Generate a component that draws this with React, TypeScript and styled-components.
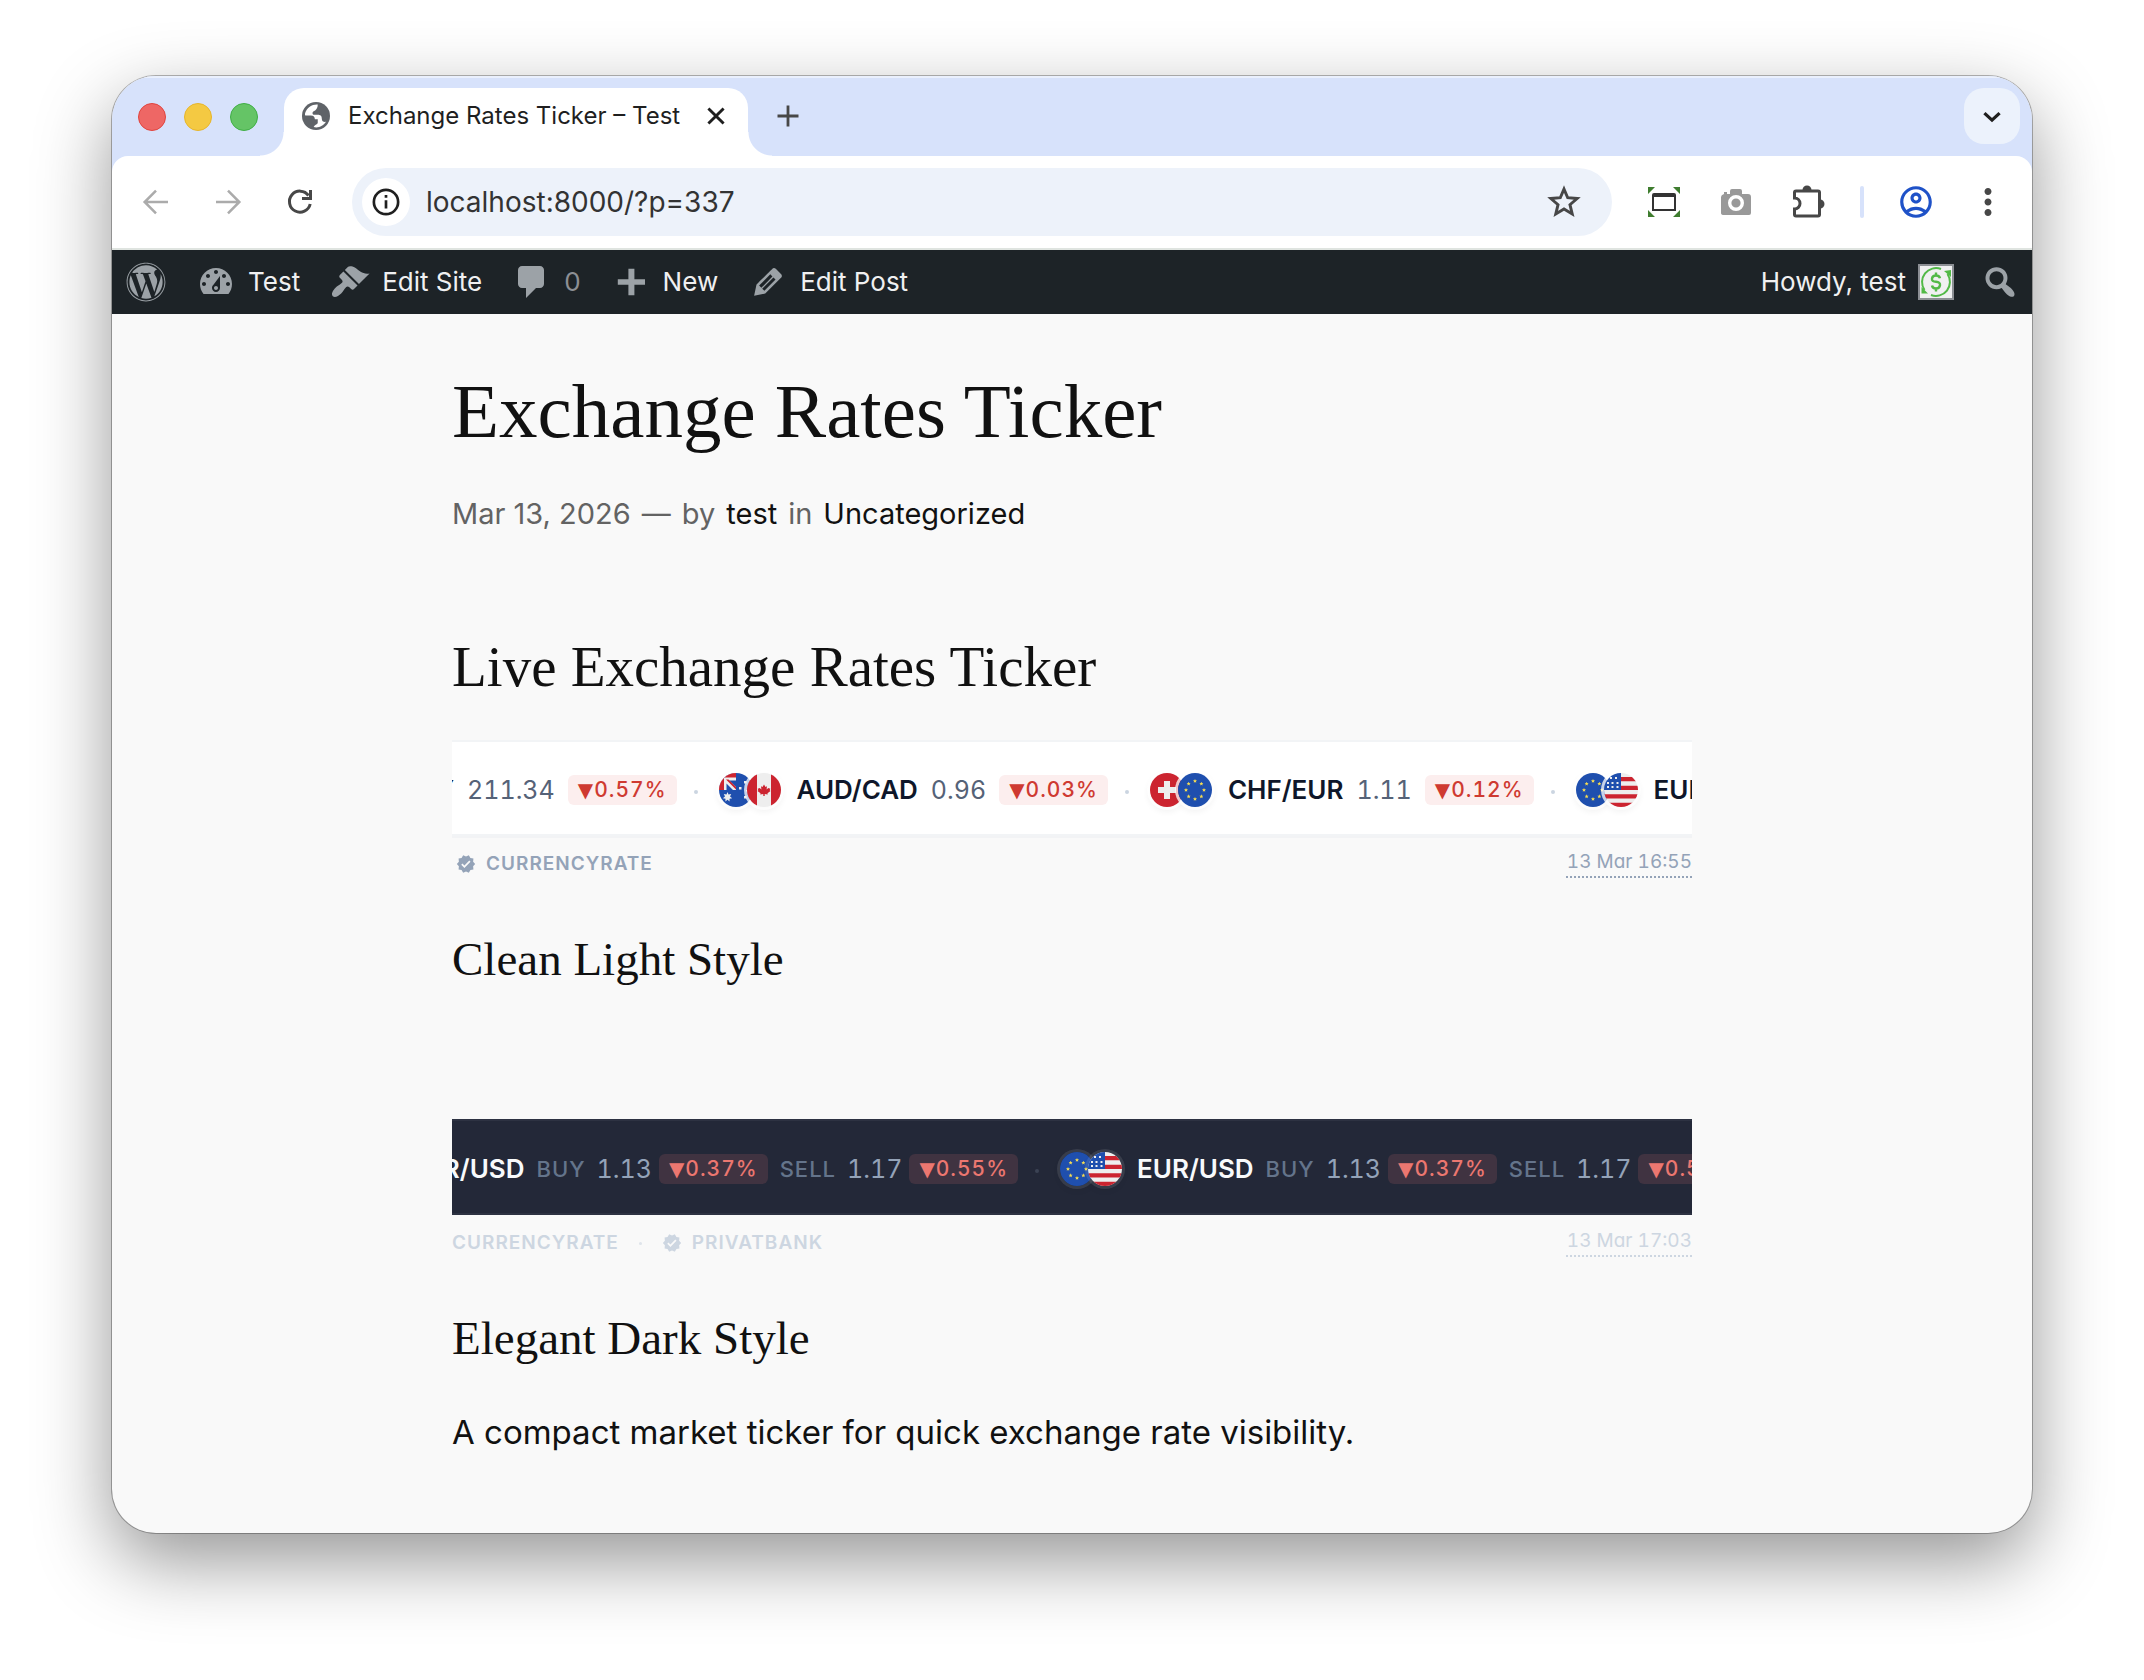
import React from "react";
import styled, { createGlobalStyle, css } from "styled-components";
import { FaWordpress } from "react-icons/fa";
import { MdMoreVert, MdOutlineAccountCircle, MdVerified } from "react-icons/md";

const sans = `Inter, "Noto Sans", sans-serif`;
const serif = `"Liberation Serif", serif`;

const GlobalStyle = createGlobalStyle`
  *, *::before, *::after { box-sizing: border-box; }
  body { margin: 0; background: #fff; font-family: ${sans}; }
  h1, h2, h3, p { margin: 0; }
  button { border: 0; padding: 0; background: none; font: inherit; color: inherit; cursor: pointer; }
  a { color: inherit; text-decoration: none; }
  svg { display: block; flex: none; }
`;

/* ---------- window ---------- */

const Desktop = styled.div`
  padding: 76px 112px 148px;
  overflow: hidden;
`;

const Window = styled.div`
  display: flex;
  flex-direction: column;
  border-radius: 44px;
  overflow: hidden;
  background: #f9f9f9;
  box-shadow: 0 0 0 1px rgba(0, 0, 0, 0.28), 0 28px 76px rgba(0, 0, 0, 0.42);
`;

const TabStrip = styled.div`
  display: flex;
  height: 80px;
  padding: 12px 12px 0 26px;
  background: #d7e2fb;
  box-shadow: inset 0 2px 0 #eaf0fd;
`;

const Lights = styled.div`
  display: flex;
  align-items: center;
  gap: 18px;
  height: 58px;
  margin-right: 26px;
`;

const Light = styled.button<{ $fill: string; $edge: string }>`
  width: 28px;
  height: 28px;
  border-radius: 50%;
  background: ${(p) => p.$fill};
  border: 1px solid ${(p) => p.$edge};
`;

const Tab = styled.div`
  position: relative;
  display: flex;
  align-items: center;
  width: 464px;
  padding: 0 18px 12px;
  border-radius: 20px 20px 0 0;
  background: #fff;
  &::before,
  &::after {
    content: "";
    position: absolute;
    bottom: 0;
    width: 24px;
    height: 24px;
  }
  &::before {
    right: 100%;
    background: radial-gradient(circle at 0 0, transparent 23px, #fff 24px);
  }
  &::after {
    left: 100%;
    background: radial-gradient(circle at 100% 0, transparent 23px, #fff 24px);
  }
`;

const TabTitle = styled.span`
  flex: 1;
  margin-left: 18px;
  font-size: 24px;
  line-height: 32px;
  white-space: nowrap;
  color: #1f1f1f;
`;

const TabButton = styled.button`
  display: grid;
  place-items: center;
  width: 28px;
  height: 56px;
  color: #1f1f1f;
`;

const NewTab = styled(TabButton)`
  margin-left: 26px;
  color: #474747;
`;

const TabSearch = styled.button`
  display: grid;
  place-items: center;
  width: 56px;
  height: 56px;
  margin-left: auto;
  border-radius: 20px;
  background: #ecf2fc;
  color: #1f1f1f;
`;

const ToolbarBack = styled.div`
  background: #d7e2fb;
`;

const Toolbar = styled.div`
  display: flex;
  align-items: center;
  height: 94px;
  padding: 0 8px;
  border-radius: 16px 16px 0 0;
  border-bottom: 2px solid #dfe4e0;
  background: #fff;
`;

const ToolButton = styled.button<{ $muted?: boolean }>`
  display: grid;
  place-items: center;
  width: 72px;
  height: 68px;
  color: ${(p) => (p.$muted ? "#ababab" : "#474747")};
`;

const ProfileButton = styled(ToolButton)`
  color: #1f52c8;
`;

const Omnibox = styled.div`
  display: flex;
  flex: 1;
  align-items: center;
  height: 68px;
  margin: 0 16px;
  padding: 0 12px 0 10px;
  border-radius: 34px;
  background: #edf2fa;
`;

const SiteInfo = styled.button`
  display: grid;
  place-items: center;
  width: 48px;
  height: 48px;
  border-radius: 50%;
  background: #fff;
  color: #1f1f1f;
`;

const Address = styled.input`
  flex: 1;
  min-width: 0;
  margin-left: 16px;
  padding: 0;
  border: 0;
  outline: 0;
  background: none;
  color: #333;
  font: 28px/36px ${sans};
`;

const BookmarkButton = styled.button`
  display: grid;
  place-items: center;
  width: 72px;
  height: 68px;
  color: #474747;
`;

const ToolDivider = styled.span`
  width: 4px;
  height: 32px;
  margin: 0 16px;
  border-radius: 2px;
  background: #d7e2fb;
`;

/* ---------- admin bar ---------- */

const AdminBar = styled.nav`
  display: flex;
  align-items: center;
  height: 64px;
  padding: 0 12px 0 14px;
  background: #1d2327;
  color: #f0f0f1;
  font-size: 26px;
  line-height: 32px;
`;

const AdminItem = styled.a<{ $dim?: boolean }>`
  display: flex;
  align-items: center;
  gap: 12px;
  padding: 0 15px;
  white-space: nowrap;
  color: ${(p) => (p.$dim ? "#8c8f94" : "inherit")};
`;

const AdminLogo = styled.a`
  margin-right: 15px;
  color: #9ca2a7;
`;

const AdminIcon = styled.span`
  color: #9ca2a7;
`;

const Account = styled.a`
  display: flex;
  align-items: center;
  gap: 12px;
  margin-left: auto;
`;

const Avatar = styled.span`
  width: 36px;
  height: 36px;
  border: 2px solid #8c8f94;
  background: #f0f0f1;
`;

const AdminSearch = styled.button`
  margin-left: 26px;
  color: #9ca2a7;
`;

/* ---------- article ---------- */

const Article = styled.main`
  width: 100%;
  max-width: 1240px;
  margin: 0 auto;
  padding: 51px 0 75px;
  color: #111;
`;

const Title = styled.h1`
  font: 400 77px/92px ${serif};
`;

const Meta = styled.p`
  display: flex;
  gap: 11px;
  margin-top: 37px;
  font-size: 29px;
  line-height: 40px;
  color: #636363;
  a { color: #111; }
`;

const SectionTitle = styled.h2`
  margin: 99px 0 39px;
  font: 400 57px/68px ${serif};
`;

const StyleTitle = styled.h3`
  margin-top: 53px;
  font: 400 47px/56px ${serif};
`;

const Paragraph = styled.p`
  margin-top: 40px;
  font-size: 33px;
  line-height: 52px;
`;

/* ---------- ticker ---------- */

type Theme = {
  bg: string; edge: string; drop: string; pair: string; rate: string; label: string;
  badgeBg: string; badgeText: string; dot: string; ring: string; source: string;
  itemGap: number; quoteGap: number;
};

const light: Theme = {
  bg: "#fff", edge: "#f2f4f6", drop: "0 2px 0 #f2f3f5", pair: "#0f172a", rate: "#556277", label: "#64748b",
  badgeBg: "#fceeee", badgeText: "#cf3a31", dot: "#cbd5e1", ring: "rgba(255,255,255,.75)", source: "#94a3b8",
  itemGap: 13, quoteGap: 13,
};

const dark: Theme = {
  bg: "#232838", edge: "#2d3242", drop: "none", pair: "#f8fafc", rate: "#94a3b8", label: "#64748b",
  badgeBg: "#403341", badgeText: "#ec7770", dot: "#3b4354", ring: "rgba(255,255,255,.1)", source: "#cdd6e1",
  itemGap: 12, quoteGap: 7,
};

const Bar = styled.div<{ $t: Theme; $gap: number }>`
  height: 96px;
  margin-top: ${(p) => p.$gap}px;
  overflow: hidden;
  border-top: 2px solid ${(p) => p.$t.edge};
  border-bottom: 2px solid ${(p) => p.$t.edge};
  background: ${(p) => p.$t.bg};
  box-shadow: ${(p) => p.$t.drop};
`;

const Track = styled.div<{ $scrolled: number }>`
  display: flex;
  align-items: center;
  width: max-content;
  height: 100%;
  padding-top: 4px;
  margin-left: -${(p) => p.$scrolled}px;
  font-size: 25px;
  line-height: 32px;
  white-space: nowrap;
  font-variant-numeric: tabular-nums;
`;

const Item = styled.div<{ $t: Theme }>`
  display: flex;
  align-items: center;
  gap: ${(p) => p.$t.itemGap}px;
`;

const Pair = styled.strong<{ $t: Theme }>`
  margin-left: 3px;
  font-size: 26px;
  font-weight: 600;
  color: ${(p) => p.$t.pair};
`;

const QuoteBox = styled.span<{ $t: Theme }>`
  display: flex;
  align-items: center;
  gap: ${(p) => p.$t.quoteGap}px;
  color: ${(p) => p.$t.rate};
`;

const Side = styled.span<{ $t: Theme }>`
  margin-right: 4px;
  font-size: 22px;
  font-weight: 500;
  letter-spacing: 1px;
  color: ${(p) => p.$t.label};
`;

const Badge = styled.span<{ $t: Theme }>`
  display: flex;
  align-items: center;
  height: 30px;
  padding: 0 10px;
  border-radius: 6px;
  background: ${(p) => p.$t.badgeBg};
  color: ${(p) => p.$t.badgeText};
  font-size: 21px;
  line-height: 30px;
  font-weight: 500;
  letter-spacing: 1px;
`;

const Down = styled.span`
  margin-right: 1px;
  font-family: "DejaVu Sans", sans-serif;
  font-size: 20px;
  line-height: 30px;
  letter-spacing: 0;
`;

const Separator = styled.span<{ $t: Theme }>`
  width: 4px;
  height: 4px;
  margin: 4px 21px 0 17px;
  border-radius: 50%;
  background: ${(p) => p.$t.dot};
`;

const Flags = styled.span`
  display: flex;
`;

const FlagDisc = styled.span<{ $t: Theme }>`
  width: 34px;
  height: 34px;
  border-radius: 50%;
  box-shadow: 0 0 0 3px ${(p) => p.$t.ring}, 0 3px 6px 2px rgba(0, 0, 0, 0.05);
  & + & { margin-left: -6px; }
  svg { border-radius: 50%; }
`;

const Footer = styled.div<{ $t: Theme }>`
  display: flex;
  align-items: center;
  justify-content: space-between;
  padding-top: 12px;
  color: ${(p) => p.$t.source};
`;

const Sources = styled.div`
  display: flex;
  align-items: center;
  padding-top: 2px;
  font-size: 19px;
  font-weight: 600;
  line-height: 26px;
  letter-spacing: 1px;
`;

const Source = styled.a<{ $verified?: boolean }>`
  display: flex;
  align-items: center;
  gap: 10px;
  ${(p) => p.$verified && css`padding-left: 4px;`}
`;

const SourceDot = styled.span`
  width: 3px;
  height: 3px;
  margin: 0 16px 0 20px;
  border-radius: 50%;
  background: currentColor;
  opacity: 0.6;
`;

const Updated = styled.time`
  padding-left: 1px;
  border-bottom: 2px dotted currentColor;
  font-size: 19px;
  line-height: 28px;
  font-feature-settings: "tnum", "cv11";
`;

/* ---------- drawings ---------- */

type Code = "AU" | "CA" | "CH" | "EU" | "US" | "GB" | "JP";

const starSpots = Array.from({ length: 8 }, (_, i) => {
  const a = (i * Math.PI) / 4;
  return [17 + Math.sin(a) * 9, 17 - Math.cos(a) * 9];
});

const flagArt: Record<Code, React.ReactNode> = {
  EU: (
    <>
      <path fill="#1f4fae" d="M0 0h34v34H0z" />
      {starSpots.map(([x, y]) => (
        <path key={`${x}-${y}`} fill="#f5dc52" transform={`translate(${x} ${y})`} d="M0-2l.6 1.3L2-.6.9.4 1.3 1.8 0 1.1-1.3 1.8-.9.4-2-.6-.6-.7z" />
      ))}
    </>
  ),
  US: (
    <>
      <path fill="#eee" d="M0 0h34v34H0z" />
      <path fill="#cc2430" d="M17 4h17v4.300H17zM17 12.700h17V17H17zM0 21.300h34v4.200H0zM0 29.800h34V34H0z" />
      <path fill="#1f4fae" d="M0 0h17v17H0z" />
      <path fill="#eee" d="M6 4h2v2H6zM11 4h2v2h-2zM3 9h2v2H3zM7.500 9h2v2h-2zM12.500 9h2v2h-2zM3 13h2v2H3zM7.500 13h2v2h-2zM12.500 13h2v2h-2z" />
    </>
  ),
  AU: (
    <>
      <path fill="#1f4fae" d="M0 0h34v34H0z" />
      <path fill="#eee" d="M0 0h17v17H0z" />
      <path fill="#cc2430" d="M0 0h17v4.500H5V17H0z" />
      <path fill="#1f4fae" d="M10 7.500h7V14zM7.500 10.500L14 17H7.500z" />
      <path fill="#cc2430" d="M7 6.500h2.500L17 14v2.500z" />
      <path fill="#eee" d="M8.500 19l1 2.600 2.700-.6-1.200 2.500 2.200 1.700-2.700.5.100 2.800-2.100-1.800-2.100 1.800.1-2.800-2.700-.5 2.200-1.700L4.800 21l2.700.6z" />
      <path fill="#eee" d="M25 8h2.500v2.500H25zM20 14h2.500v2.500H20zM29 13h2.500v2.500H29zM25 23h2.500v2.500H25zM27 17h1.500v1.500H27z" />
    </>
  ),
  CA: (
    <>
      <path fill="#eee" d="M0 0h34v34H0z" />
      <path fill="#cc2430" d="M0 0h10v34H0zM24 0h10v34H24z" />
      <path fill="#cc2430" d="M17 11.500l1.500 2.500 1.500-.7-.4 3.200 1.700-1.500 2 .8-.6 1.400.8.900-3 2.100.2 1.300-3-.4V23h-1.400v-1.900l-3 .4.2-1.300-3-2.100.8-.9-.6-1.400 2-.8 1.700 1.500-.4-3.200 1.500.7z" />
    </>
  ),
  CH: (
    <>
      <path fill="#cc2430" d="M0 0h34v34H0z" />
      <path fill="#eee" d="M14 8h6v6h6v6h-6v6h-6v-6H8v-6h6z" />
    </>
  ),
  GB: <path fill="#1f4fae" d="M0 0h34v34H0z" />,
  JP: <path fill="#eee" d="M0 0h34v34H0z" />,
};

const Flag = ({ code, t }: { code: Code; t: Theme }) => (
  <FlagDisc $t={t}>
    <svg width="34" height="34" viewBox="0 0 34 34" aria-hidden="true">{flagArt[code]}</svg>
  </FlagDisc>
);

const Dash = ({ d }: { d: string }) => (
  <svg width="40" height="40" viewBox="0 0 20 20" fill="currentColor" aria-hidden="true"><path d={d} /></svg>
);

const dash = {
  dashboard: "M3.76 16h12.48c1.1-1.37 1.76-3.11 1.76-5 0-4.42-3.58-8-8-8s-8 3.58-8 8c0 1.89.66 3.63 1.76 5zM10 4c.55 0 1 .45 1 1s-.45 1-1 1-1-.45-1-1 .45-1 1-1zM6 6c.55 0 1 .45 1 1s-.45 1-1 1-1-.45-1-1 .45-1 1-1zm8 0c.55 0 1 .45 1 1s-.45 1-1 1-1-.45-1-1 .45-1 1-1zm-5.370 5.550L12 7v6c0 1.100-.9 2-2 2s-2-.9-2-2c0-.57.24-1.080.63-1.450zM4 10c.55 0 1 .45 1 1s-.45 1-1 1-1-.45-1-1 .45-1 1-1zm12 0c.55 0 1 .45 1 1s-.45 1-1 1-1-.45-1-1 .45-1 1-1zm-5 3c0-.55-.45-1-1-1s-1 .45-1 1 .45 1 1 1 1-.45 1-1z",
  brush: "M14.480 11.060L7.410 3.990l1.500-1.500c.5-.56 2.300-.47 3.510.32 1.210.8 1.430 1.280 2.910 2.100 1.180.64 2.450 1.260 4.450.85zm-.71.71L6.700 4.700 4.930 6.470c-.39.39-.39 1.020 0 1.410l1.060 1.060c.39.39.39 1.030 0 1.420-.6.6-1.430 1.110-2.210 1.690-.35.26-.7.53-1.010.84C1.430 14.230.4 16.080 1.400 17.070c.99 1 2.840-.03 4.180-1.360.31-.31.58-.66.85-1.020.57-.78 1.080-1.610 1.690-2.210.39-.39 1.020-.39 1.410 0l1.060 1.060c.39.39 1.020.39 1.410 0z",
  comment: "M5 2h9c1.100 0 2 .9 2 2v7c0 1.100-.9 2-2 2h-2l-5 5v-5H5c-1.100 0-2-.9-2-2V4c0-1.100.9-2 2-2z",
  plus: "M17 8.600v2.800h-5.300v5.200H8.700v-5.200H3.400V8.600h5.300V3.400h3v5.200z",
  pencil: "M13.890 3.390l2.710 2.720c.46.46.42 1.240.03 1.640l-8.010 8.020-5.560 1.160 1.160-5.580s7.600-7.630 7.990-8.030c.39-.39 1.220-.39 1.680.07zm-2.730 2.790l-5.590 5.610 1.110 1.110 5.540-5.650zm-2.970 8.230l5.580-5.600-1.070-1.080-5.590 5.600z",
  search: "M12.140 4.180c1.870 1.870 2.110 4.750.72 6.890.12.1.22.21.36.31.2.16.47.36.81.59.34.24.56.39.66.47.42.31.73.57.94.78.32.32.6.65.84 1 .25.35.44.69.59 1.040.14.35.21.68.18 1-.02.32-.14.59-.36.81s-.49.34-.81.36c-.31.02-.65-.04-.99-.19-.35-.14-.7-.34-1.040-.59-.35-.24-.68-.52-1-.84-.21-.21-.47-.52-.77-.93-.1-.13-.25-.35-.47-.66-.22-.32-.4-.57-.56-.78-.16-.2-.29-.35-.44-.5-2.070 1.090-4.690.76-6.440-.98-2.140-2.150-2.140-5.640 0-7.780 2.150-2.150 5.630-2.150 7.780 0zm-1.410 6.360c1.360-1.370 1.360-3.580 0-4.950-1.370-1.370-3.590-1.370-4.950 0-1.370 1.370-1.370 3.580 0 4.950 1.360 1.370 3.580 1.370 4.950 0z",
};

const Stroke = ({ size, width, d }: { size: number; width: number; d: string }) => (
  <svg width={size} height={size} viewBox="0 0 24 24" fill="none" stroke="currentColor" strokeWidth={width} aria-hidden="true">
    <path d={d} />
  </svg>
);

const Globe = () => (
  <svg width="28" height="28" viewBox="0 0 24 24" aria-hidden="true">
    <circle cx="12" cy="12" r="12" fill="#5f6368" />
    <path fill="#fff" d="M13.500 2.200C9 1.800 4.200 4.600 2.700 9.500 2.400 11 2.500 11.500 3 11.500h4.500c2.500 0 3.500 1.200 3.500 3.300h2.500v3c0 1.500-2.500 1.500-3.500 3.700 4 1 8.500-.8 10.500-4.500-2 .3-3.500-.5-3.500-2.500 0-2.800-1.500-3.500-3.500-3.500h-3c-1 0-1.500-.8-1.500-1.600C9 7.500 13.500 8 13.500 2.200z" />
  </svg>
);

const CaptureIcon = () => (
  <svg width="32" height="30" viewBox="0 0 32 30" aria-hidden="true">
    <path fill="#3f7d2f" d="M0 0h7L0 7zM25 0h7v7zM0 23l7 7H0zM32 23v7h-7z" />
    <path fill="#333" fillRule="evenodd" d="M6 6h20a2 2 0 0 1 2 2v16H4V8a2 2 0 0 1 2-2zm0 4v12h20V10z" />
  </svg>
);

const CameraIcon = () => (
  <svg width="30" height="28" viewBox="0 0 30 28" aria-hidden="true">
    <path fill="#999" d="M3 6V4h3v2h3V3q0-2 2-2h8q2 0 2 2v3h6q3 0 3 3v16q0 2-2 2H3q-3 0-3-2V9q0-2 3-3z" />
    <circle cx="15" cy="15" r="6.300" fill="#999" stroke="#fff" strokeWidth="3.400" />
  </svg>
);

const PuzzleIcon = () => (
  <svg width="34" height="34" viewBox="0 0 34 34" fill="none" aria-hidden="true">
    <path d="M5 6h22q1.500 0 1.500 1.500v22q0 1.500-1.500 1.500H5q-1.500 0-1.500-1.500v-5.500a5.400 5.400 0 0 0 0-11V7.500Q3.500 6 5 6z" stroke="#474747" strokeWidth="3" />
    <path d="M11.500 5a4.500 4.500 0 0 1 9 0zM29 14.500a4.500 4.500 0 0 1 0 9z" fill="#474747" />
  </svg>
);

const StarIcon = () => (
  <svg width="36" height="36" viewBox="0 0 32 32" fill="none" stroke="#474747" strokeWidth="2.600" aria-hidden="true">
    <path d="M16 4.500l3.300 7.700 8.400.7-6.400 5.500 2 8.200-7.300-4.400-7.300 4.400 2-8.200-6.400-5.500 8.400-.7z" />
  </svg>
);

const ReloadIcon = () => (
  <svg width="28" height="28" viewBox="0 0 28 28" fill="none" stroke="currentColor" strokeWidth="3" aria-hidden="true">
    <path d="M24.200 16A10.500 10.500 0 1 1 22.500 7.500" />
    <path d="M24.500 2v8.500H16" />
  </svg>
);

const DollarCycle = () => (
  <svg width="32" height="32" viewBox="0 0 32 32" fill="none" stroke="#52b947" strokeWidth="2" aria-hidden="true">
    <path d="M21 3A14 14 0 0 0 4.500 24M11 29A14 14 0 0 0 27.500 8" />
    <path strokeWidth="2.400" d="M12 19.500q.5 3 4 3t4-3.200-4-3.500-4-3.300 4-3 4 2.800M16 6.500v3M16 22.500v3" />
    <path fill="#52b947" stroke="none" d="M24 5l7-1v7zM1.500 21l6.500 6.500H1.500z" />
  </svg>
);

/* ---------- ticker parts ---------- */

type Quote = { side?: string; rate: string; change: string };
type TickerItem = { flags: [Code, Code]; pair: string; quotes: Quote[] };

const Ticker = ({ t, items, scrolled, gap = 0 }: { t: Theme; items: TickerItem[]; scrolled: number; gap?: number }) => (
  <Bar $t={t} $gap={gap}>
    <Track $scrolled={scrolled}>
      {items.map((item, i) => (
        <React.Fragment key={i}>
          {i > 0 && <Separator $t={t} />}
          <Item $t={t}>
            <Flags>{item.flags.map((c) => <Flag key={c} code={c} t={t} />)}</Flags>
            <Pair $t={t}>{item.pair}</Pair>
            {item.quotes.map((q) => (
              <QuoteBox key={q.rate} $t={t}>
                {q.side && <Side $t={t}>{q.side}</Side>}
                {q.rate}
                <Badge $t={t}><Down>▼</Down>{q.change}</Badge>
              </QuoteBox>
            ))}
          </Item>
        </React.Fragment>
      ))}
    </Track>
  </Bar>
);

const crossRates: TickerItem[] = [
  { flags: ["GB", "JP"], pair: "GBP/JPY", quotes: [{ rate: "211.34", change: "0.57%" }] },
  { flags: ["AU", "CA"], pair: "AUD/CAD", quotes: [{ rate: "0.96", change: "0.03%" }] },
  { flags: ["CH", "EU"], pair: "CHF/EUR", quotes: [{ rate: "1.11", change: "0.12%" }] },
  { flags: ["EU", "US"], pair: "EUR/USD", quotes: [] },
];

const bankRate: TickerItem = {
  flags: ["EU", "US"],
  pair: "EUR/USD",
  quotes: [
    { side: "BUY", rate: "1.13", change: "0.37%" },
    { side: "SELL", rate: "1.17", change: "0.55%" },
  ],
};

export default function App() {
  return (
    <>
      <GlobalStyle />
      <Desktop>
        <Window>
          <TabStrip>
            <Lights>
              <Light $fill="#ee6765" $edge="#e0443e" aria-label="Close window" />
              <Light $fill="#f4c942" $edge="#e6b52c" aria-label="Minimize window" />
              <Light $fill="#65c466" $edge="#3fae45" aria-label="Zoom window" />
            </Lights>
            <Tab>
              <Globe />
              <TabTitle>Exchange Rates Ticker – Test</TabTitle>
              <TabButton aria-label="Close tab"><Stroke size={28} width={2.5} d="M5.500 5.500l13 13M18.500 5.500l-13 13" /></TabButton>
            </Tab>
            <NewTab aria-label="New tab"><Stroke size={28} width={2.4} d="M12 3v18M3 12h18" /></NewTab>
            <TabSearch aria-label="Search tabs"><Stroke size={28} width={2.800} d="M5.500 9.500l6.500 6 6.500-6" /></TabSearch>
          </TabStrip>
          <ToolbarBack>
            <Toolbar>
              <ToolButton $muted aria-label="Back"><Stroke size={32} width={1.900} d="M21 12H4M12 3.500L3.500 12l8.500 8.500" /></ToolButton>
              <ToolButton $muted aria-label="Forward"><Stroke size={32} width={1.900} d="M3 12h17M12 3.500l8.500 8.500-8.500 8.500" /></ToolButton>
              <ToolButton aria-label="Reload"><ReloadIcon /></ToolButton>
              <Omnibox>
                <SiteInfo aria-label="Site information">
                  <Stroke size={28} width={2.300} d="M12 1.600a10.400 10.400 0 1 0 0 20.800 10.400 10.400 0 1 0 0-20.800M12 10.500v7M12 6v2.400" />
                </SiteInfo>
                <Address aria-label="Address" defaultValue="localhost:8000/?p=337" spellCheck={false} />
                <BookmarkButton aria-label="Bookmark this page"><StarIcon /></BookmarkButton>
              </Omnibox>
              <ToolButton aria-label="Capture window"><CaptureIcon /></ToolButton>
              <ToolButton aria-label="Camera"><CameraIcon /></ToolButton>
              <ToolButton aria-label="Extensions"><PuzzleIcon /></ToolButton>
              <ToolDivider />
              <ProfileButton aria-label="Profile"><MdOutlineAccountCircle size={38} /></ProfileButton>
              <ToolButton aria-label="Menu"><MdMoreVert size={42} /></ToolButton>
            </Toolbar>
          </ToolbarBack>
          <AdminBar aria-label="Admin">
            <AdminLogo href="#about" aria-label="About WordPress"><FaWordpress size={40} /></AdminLogo>
            <AdminItem href="#site"><AdminIcon><Dash d={dash.dashboard} /></AdminIcon>Test</AdminItem>
            <AdminItem href="#edit-site"><AdminIcon><Dash d={dash.brush} /></AdminIcon>Edit Site</AdminItem>
            <AdminItem href="#comments" $dim><AdminIcon><Dash d={dash.comment} /></AdminIcon>0</AdminItem>
            <AdminItem href="#new"><AdminIcon><Dash d={dash.plus} /></AdminIcon>New</AdminItem>
            <AdminItem href="#edit-post"><AdminIcon><Dash d={dash.pencil} /></AdminIcon>Edit Post</AdminItem>
            <Account href="#account">Howdy, test<Avatar><DollarCycle /></Avatar></Account>
            <AdminSearch aria-label="Search"><Dash d={dash.search} /></AdminSearch>
          </AdminBar>
          <Article>
            <Title>Exchange Rates Ticker</Title>
            <Meta>
              <time dateTime="2026-03-13">Mar 13, 2026</time>
              <span>—</span>
              <span>by</span>
              <a href="#author">test</a>
              <span>in</span>
              <a href="#category">Uncategorized</a>
            </Meta>
            <SectionTitle>Live Exchange Rates Ticker</SectionTitle>
            <Ticker t={light} items={crossRates} scrolled={188} />
            <Footer $t={light}>
              <Sources><Source href="#currencyrate" $verified><MdVerified size={20} />CURRENCYRATE</Source></Sources>
              <Updated>13 Mar 16:55</Updated>
            </Footer>
            <StyleTitle>Clean Light Style</StyleTitle>
            <Ticker t={dark} items={[bankRate, bankRate]} scrolled={121} gap={132} />
            <Footer $t={dark}>
              <Sources>
                <Source href="#currencyrate-bank">CURRENCYRATE</Source>
                <SourceDot />
                <Source href="#privatbank" $verified><MdVerified size={20} />PRIVATBANK</Source>
              </Sources>
              <Updated>13 Mar 17:03</Updated>
            </Footer>
            <StyleTitle>Elegant Dark Style</StyleTitle>
            <Paragraph>A compact market ticker for quick exchange rate visibility.</Paragraph>
          </Article>
        </Window>
      </Desktop>
    </>
  );
}
